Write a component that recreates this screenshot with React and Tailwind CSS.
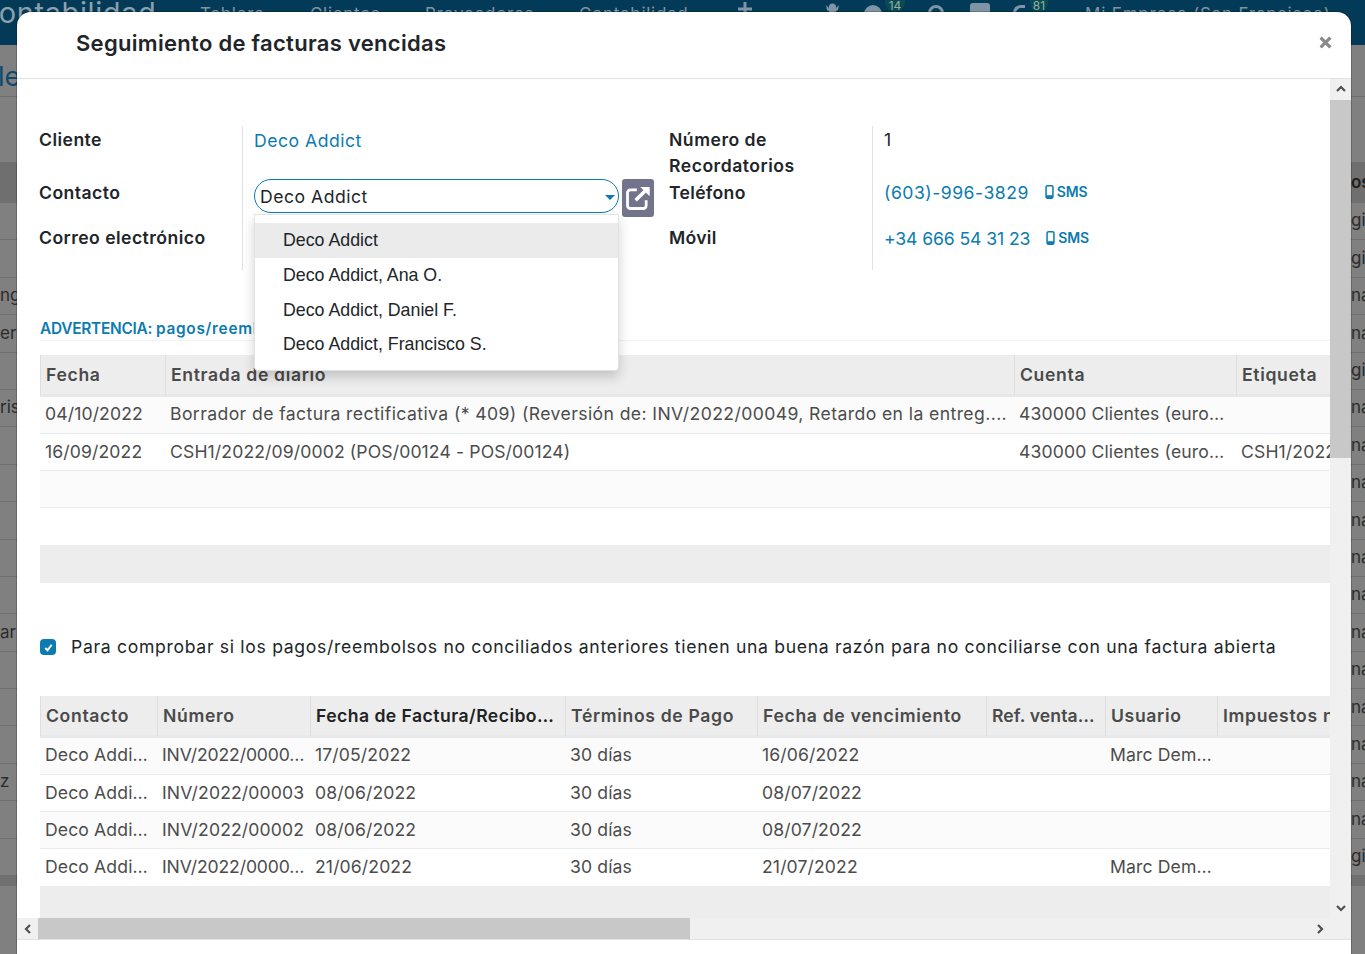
import React from 'react';

const FONT = "font-['Inter','Noto_Sans',sans-serif]";

// rows of the list behind the dialog, only their cut ends show
const BACK_ROWS = [
  ['', 'gi'], ['', 'gi'], ['ng', 'na'], ['er', 'na'], ['', 'gi'], ['ris', 'na'], ['', 'na'], ['', 'na'], ['', 'na'],
  ['', 'na'], ['', 'na'], ['ar', 'na'], ['', 'na'], ['', 'na'], ['', 'na'], ['z', 'na'], ['', 'na'], ['', 'gis'],
];

const PAY_COLS = ['w-[125px]', 'w-[849px]', 'w-[222px]', 'w-[300px]'];
const PAY_HEAD = ['Fecha', 'Entrada de diario', 'Cuenta', 'Etiqueta'];
const PAY_ROWS = [
  ['04/10/2022', <span className="tracking-[0.4px]">Borrador de factura rectificativa (* 409) (Reversión de: INV/2022/00049, Retardo en la entreg....</span>, '430000 Clientes (euro…', ''],
  ['16/09/2022', 'CSH1/2022/09/0002 (POS/00124 - POS/00124)', '430000 Clientes (euro…', 'CSH1/2022/09/0002'],
  ['', '', '', ''],
  ['', '', '', ''],
];

const cutNumber = <span className="tracking-[-0.15px]">INV/2022/0000…</span>;

const INV_COLS = ['w-[117px]', 'w-[153px]', 'w-[255px]', 'w-[192px]', 'w-[229px]', 'w-[119px]', 'w-[112px]', 'w-[200px]'];
const INV_HEAD = ['Contacto', 'Número', 'Fecha de Factura/Recibo…', 'Términos de Pago', 'Fecha de vencimiento', <span className="tracking-[0.1px]">Ref. venta…</span>, 'Usuario', 'Impuestos no incluidos'];
const INV_ROWS = [
  ['Deco Addi…', cutNumber, '17/05/2022', '30 días', '16/06/2022', '', 'Marc Dem…', ''],
  ['Deco Addi…', 'INV/2022/00003', '08/06/2022', '30 días', '08/07/2022', '', '', ''],
  ['Deco Addi…', 'INV/2022/00002', '08/06/2022', '30 días', '08/07/2022', '', '', ''],
  ['Deco Addi…', cutNumber, '21/06/2022', '30 días', '21/07/2022', '', 'Marc Dem…', ''],
];

const DROPDOWN = ['Deco Addict', 'Deco Addict, Ana O.', 'Deco Addict, Daniel F.', 'Deco Addict, Francisco S.'];

const Chevron = ({ points, className }) => (
  <svg viewBox="0 0 12 12" className={className} fill="none" stroke="currentColor" strokeWidth="2.2">
    <polyline points={points} />
  </svg>
);

const Sms = () => (
  <span className="ml-[16px] inline-flex items-center gap-[3px] text-[14px] font-semibold tracking-[-0.2px] text-[#0b7bb0]">
    <svg viewBox="0 0 8 13" className="h-[14px] w-[9px]" fill="none" stroke="currentColor">
      <rect x="0.8" y="0.8" width="6.4" height="11.4" rx="1.2" strokeWidth="1.4" />
      <rect x="1" y="9.5" width="6" height="2.5" fill="currentColor" stroke="none" />
    </svg>
    SMS
  </span>
);

const DataTable = ({ cols, head, rows, darkHead }) => (
  <table className="w-max table-fixed border-separate border-spacing-0 text-[17.6px] tracking-[0.12px] text-[#4c4c4c]">
    <colgroup>
      {cols.map((c) => <col key={c} className={c} />)}
    </colgroup>
    <thead>
      <tr className="h-[41.5px] bg-[#ededed]">
        {head.map((h, i) => (
          <th
            key={i}
            className={`overflow-hidden whitespace-nowrap border-b-[3px] border-l border-b-[#e6e8ea] border-l-[#dedede] pl-[5px] pt-[2px] text-left font-semibold ${darkHead === i ? 'tracking-[0.45px] text-[#222222]' : 'tracking-[0.65px] text-[#4a4a4a]'}`}
          >
            {h}
          </th>
        ))}
      </tr>
    </thead>
    <tbody>
      {rows.map((r, i) => (
        <tr key={i} className={`h-[37.25px] ${i % 2 === 0 ? 'bg-[#fbfbfb]' : 'bg-white'}`}>
          {r.map((c, j) => (
            <td key={j} className="overflow-hidden whitespace-nowrap border-b border-[#e9ecef] pl-[5px]">{c}</td>
          ))}
        </tr>
      ))}
    </tbody>
    <tfoot>
      <tr className="h-[37px] bg-[#ededed]">
        <td colSpan={cols.length} />
      </tr>
    </tfoot>
  </table>
);

const App = () => {
  return (
    <div className={`relative h-[954px] overflow-hidden bg-[#808080] ${FONT}`}>
      {/* --- page behind the dialog, dimmed --- */}
      <div className="flex h-[45px] items-start whitespace-nowrap bg-[#033a58] text-[17px] tracking-[0.7px] text-[#7d95a4]">
        <span className="-ml-[23px] -mt-[9px] w-[223px] text-[29px] tracking-[0.6px] text-[#8ba0ad]">Contabilidad</span>
        <span className="mt-[2px] w-[110px]">Tablero</span>
        <span className="mt-[2px] w-[115px]">Clientes</span>
        <span className="mt-[2px] w-[154px]">Proveedores</span>
        <span className="mt-[2px] w-[156px]">Contabilidad</span>
        <svg viewBox="0 0 14 14" className="ml-[3px] mt-[2px] h-[14px] w-[14px]" fill="currentColor">
          <path d="M5.5 0h3v5.5H14v3H8.5V14h-3V8.5H0v-3h5.5z" />
        </svg>
        <svg viewBox="0 0 15 14" className="ml-[73px] mt-[2px] h-[14px] w-[15px]" fill="currentColor">
          <circle cx="7.5" cy="5" r="3.6" />
          <path d="M1 3 5 7h5l4-4-1 5-2 1v5H4V9L2 8z" />
        </svg>
        <span className="ml-[24px] mt-[5px] h-[18px] w-[18px] rounded-full bg-[#7d95a4]" />
        <span className="ml-[3px] h-[12px] w-[20px] rounded-b-full bg-[#0b4a52] text-center text-[12px] leading-[11px] tracking-normal text-[#8fb0a8]">14</span>
        <span className="ml-[23px] mt-[5px] h-[16px] w-[16px] rounded-full border-[3px] border-[#7d95a4]" />
        <span className="ml-[26px] mt-[3px] h-[16px] w-[20px] rounded-[3px] bg-[#7d95a4]" />
        <span className="ml-[23px] mt-[5px] h-[16px] w-[12px] rounded-l-full border-l-[3px] border-t-[3px] border-[#7d95a4]" />
        <span className="ml-[5px] h-[12px] w-[18px] rounded-b-full bg-[#0b4a52] text-center text-[12px] leading-[11px] tracking-normal text-[#8fb0a8]">81</span>
        <span className="ml-[37px] mt-[2px] tracking-[0.8px]">Mi Empresa (San Francisco)</span>
      </div>
      <div className="h-[52px] border-b border-[#6f6f6f] pt-[12px] text-[27px] text-[#0b4a6c]">
        <span className="-ml-[2px] block leading-[40px]">le</span>
      </div>
      <div className="h-[65px]" />
      <div className="flex h-[41px] items-center justify-between bg-[#6f6f6f] text-[17px] font-semibold text-[#1e1e1e]">
        <span />
        <span className="w-[14px] overflow-hidden">os</span>
      </div>
      {BACK_ROWS.map(([l, r], i) => (
        <div key={i} className="flex h-[37.4px] items-center justify-between border-b border-[#707070] text-[17px] text-[#2b2b2b]">
          <span className="w-[17px] overflow-hidden whitespace-nowrap">{l}</span>
          <span className="w-[14px] overflow-hidden whitespace-nowrap">{r}</span>
        </div>
      ))}
      <div className="h-[10px] bg-[#707070]" />

      {/* --- dialog --- */}
      <div className="absolute left-[17px] top-[12px] flex h-[942px] w-[1334px] flex-col overflow-hidden rounded-t-[14px] bg-white shadow-[0_0_0_1px_rgba(0,0,0,0.2)]">
        <header className="flex h-[67px] shrink-0 items-center justify-between border-b border-[#dee2e6] pb-[4px] pl-[59px] pr-[19px]">
          <h4 className="text-[22px] font-semibold tracking-[0.3px] text-[#212529]">Seguimiento de facturas vencidas</h4>
          <button className="mt-[-2px] text-[#8a8a8a]">
            <svg viewBox="0 0 12 12" className="h-[13px] w-[13px]" fill="none" stroke="currentColor" strokeWidth="3">
              <path d="M1.5 1.5 10.5 10.5M10.5 1.5 1.5 10.5" />
            </svg>
          </button>
        </header>

        <div className="flex h-[860px] shrink-0">
          <div className="flex w-[1313px] flex-col">
            <div className="h-[839px] overflow-hidden pt-[47px]">
              {/* form */}
              <div className="ml-[22px] grid grid-cols-[203px_427px_203px_1fr] grid-rows-[53px_46px_45px] text-[17.6px] leading-[26px] text-[#212529]">
                <div className="pt-px font-semibold tracking-[0.45px]">Cliente</div>
                <div className="border-l border-[#dee2e6] pl-[11px] pt-[2px] tracking-[0.5px] text-[#0b7bb0]">Deco Addict</div>
                <div className="pt-px font-semibold tracking-[0.5px]">Número de Recordatorios</div>
                <div className="border-l border-[#dee2e6] pl-[11px] pt-px">1</div>

                <div className="pt-px font-semibold tracking-[0.45px]">Contacto</div>
                <div className="flex items-start gap-[3px] border-l border-[#dee2e6] pl-[11px]">
                  <div className="relative z-10 h-[34px] w-[365px] shrink-0">
                    <div className="flex h-[34px] items-center justify-between rounded-[17px] border border-[#0b7bb0] pl-[5px] pr-[3px] pt-[1px] tracking-[0.5px]">
                      Deco Addict
                      <span className="mt-[2px] h-0 w-0 border-x-[5px] border-t-[5px] border-x-transparent border-t-[#0b7bb0]" />
                    </div>
                    <ul className="absolute left-0 top-[35px] w-[365px] rounded-b-[4px] border border-[#e2e2e2] bg-white pb-[8px] pt-[8px] font-['Liberation_Sans',sans-serif] text-[17.8px] shadow-[0_6px_12px_rgba(0,0,0,0.18)]">
                      {DROPDOWN.map((d, i) => (
                        <li key={d} className={`flex h-[34.7px] items-center pl-[28px] ${i === 0 ? 'bg-[#ebebeb]' : ''}`}>{d}</li>
                      ))}
                    </ul>
                  </div>
                  <button className="flex h-[38px] w-[32px] shrink-0 items-center justify-center rounded-[3px] bg-[#72748c]">
                    <svg viewBox="0 0 24 24" className="h-[28px] w-[28px]" fill="none" stroke="white" strokeWidth="2.4">
                      <path d="M11 5H5.5A2.5 2.5 0 0 0 3 7.5v11A2.5 2.5 0 0 0 5.5 21h11a2.5 2.5 0 0 0 2.5-2.5V14" />
                      <path d="M10 14 20 4" strokeWidth="3" />
                      <path d="M14 2.5h8v8z" fill="white" stroke="none" />
                    </svg>
                  </button>
                </div>
                <div className="pt-px font-semibold tracking-[0.3px]">Teléfono</div>
                <div className="border-l border-[#dee2e6] pl-[11px] tracking-[0.5px] text-[#0b7bb0]">(603)-996-3829<Sms /></div>

                <div className="font-semibold tracking-[0.45px]">Correo electrónico</div>
                <div className="border-l border-[#dee2e6]" />
                <div className="font-semibold tracking-[0.3px]">Móvil</div>
                <div className="border-l border-[#dee2e6] pl-[11px] tracking-[-0.1px] text-[#0b7bb0]">+34 666 54 31 23<Sms /></div>
              </div>

              {/* unreconciled payments */}
              <div className="ml-[23px] mt-[47px] h-[24px] overflow-hidden whitespace-nowrap border-b border-[#f2f2f2] pt-px text-[15.4px] font-semibold leading-[22px] text-[#0b7bb0]">
                <span className="tracking-[-0.25px]">ADVERTENCIA:</span> <span className="tracking-[0.7px]">pagos/reembolsos no conciliados</span>
              </div>
              <div className="ml-[23px] mt-[14px]">
                <DataTable cols={PAY_COLS} head={PAY_HEAD} rows={PAY_ROWS} />
              </div>

              <label className="ml-[23px] mt-[51.5px] flex h-[26px] items-center gap-[15px] whitespace-nowrap text-[17.6px] tracking-[0.68px] text-[#212529]">
                <span className="flex h-[16px] w-[16px] items-center justify-center rounded-[4px] bg-[#0b7bb0]">
                  <svg viewBox="0 0 12 12" className="h-[11px] w-[11px]" fill="none" stroke="white" strokeWidth="2.2">
                    <path d="M2.5 6.5 5 9l4.5-6" />
                  </svg>
                </span>
                Para comprobar si los pagos/reembolsos no conciliados anteriores tienen una buena razón para no conciliarse con una factura abierta
              </label>

              {/* open invoices */}
              <div className="ml-[23px] mt-[36px]">
                <DataTable cols={INV_COLS} head={INV_HEAD} rows={INV_ROWS} darkHead={2} />
              </div>
            </div>

            {/* horizontal scrollbar */}
            <div className="flex h-[21px] items-center bg-[#f0f0f0] text-[#505050]">
              <div className="flex w-[21px] justify-center"><Chevron points="8,2 4,6 8,10" className="h-[12px] w-[12px]" /></div>
              <div className="h-full w-[652px] bg-[#c8c8c8]" />
              <div className="ml-auto flex w-[21px] justify-center"><Chevron points="4,2 8,6 4,10" className="h-[12px] w-[12px]" /></div>
            </div>
          </div>

          {/* vertical scrollbar */}
          <div className="flex w-[21px] flex-col bg-[#f0f0f0] text-[#505050]">
            <div className="flex h-[21px] items-center justify-center pb-[2px]"><Chevron points="2,8 6,4 10,8" className="h-[12px] w-[12px]" /></div>
            <div className="h-[358px] bg-[#c8c8c8]" />
            <div className="mt-[439px] flex h-[21px] items-center justify-center"><Chevron points="2,4 6,8 10,4" className="h-[12px] w-[12px]" /></div>
          </div>
        </div>
        <div className="flex-1 border-t border-[#dee2e6]" />
      </div>
    </div>
  );
};

export default App;
